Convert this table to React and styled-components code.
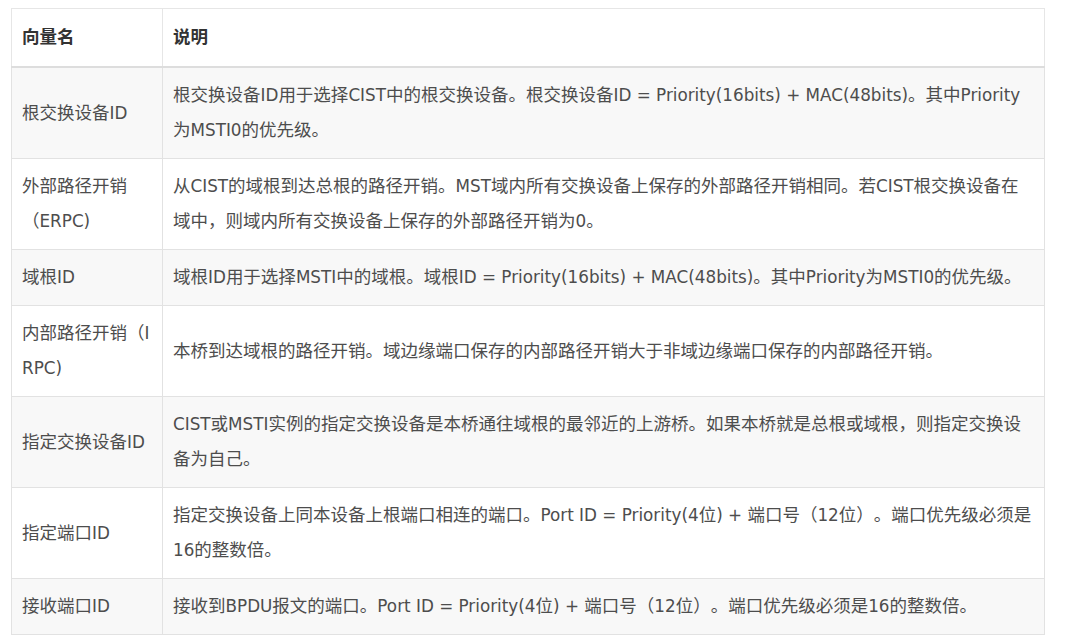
import React from 'react';
import styled, { createGlobalStyle } from 'styled-components';

const GlobalStyle = createGlobalStyle`
  body {
    margin: 0;
    background: #ffffff;
    font-family: "DejaVu Sans", "Noto Sans CJK SC", sans-serif;
  }
`;

const Page = styled.div`
  padding: 8px 0 0 11px;
`;

const Table = styled.table`
  width: 1034px;
  border-collapse: collapse;
  border: 1px solid #e2e2e2;
  font-size: 17.5px;
  line-height: 35px;
  color: #4d4d4d;
  text-spacing-trim: space-all;
`;

const HeadCell = styled.th`
  text-align: left;
  font-weight: bold;
  color: #333333;
  padding: 11px 10px;
  border: 1px solid #e6e6e6;
  border-bottom: 2px solid #dddddd;
  background: #ffffff;
  width: ${({ $w }) => $w || 'auto'};
`;

const Row = styled.tr`
  background: ${({ $striped }) => ($striped ? '#f8f8f8' : '#ffffff')};
`;

const Cell = styled.td`
  padding: 10px;
  border: 1px solid #e2e2e2;
  vertical-align: middle;
`;

const DescCell = styled(Cell)`
  padding-right: 12px;
`;

// latin runs get their own size so the mixed lines keep the reference widths
const Latin = styled.span`
  font-size: 16.8px;
`;

const rows = [
  ['根交换设备ID', '根交换设备ID用于选择CIST中的根交换设备。根交换设备ID = Priority(16bits) + MAC(48bits)。其中Priority为MSTI0的优先级。'],
  ['外部路径开销（ERPC)', '从CIST的域根到达总根的路径开销。MST域内所有交换设备上保存的外部路径开销相同。若CIST根交换设备在域中，则域内所有交换设备上保存的外部路径开销为0。'],
  ['域根ID', '域根ID用于选择MSTI中的域根。域根ID = Priority(16bits) + MAC(48bits)。其中Priority为MSTI0的优先级。'],
  ['内部路径开销（I RPC)', '本桥到达域根的路径开销。域边缘端口保存的内部路径开销大于非域边缘端口保存的内部路径开销。'],
  ['指定交换设备ID', 'CIST或MSTI实例的指定交换设备是本桥通往域根的最邻近的上游桥。如果本桥就是总根或域根，则指定交换设备为自己。'],
  ['指定端口ID', '指定交换设备上同本设备上根端口相连的端口。Port ID = Priority(4位) + 端口号（12位）。端口优先级必须是16的整数倍。'],
  ['接收端口ID', '接收到BPDU报文的端口。Port ID = Priority(4位) + 端口号（12位）。端口优先级必须是16的整数倍。'],
];

const Mixed = ({ text }) =>
  text.split(/([\x20-\x7e]+)/).map((part, i) =>
    i % 2 ? <Latin key={i}>{part}</Latin> : part
  );

export default function App() {
  return (
    <>
      <GlobalStyle />
      <Page>
        <Table>
          <thead>
            <tr>
              <HeadCell $w="130px">向量名</HeadCell>
              <HeadCell>说明</HeadCell>
            </tr>
          </thead>
          <tbody>
            {rows.map(([name, desc], i) => (
              <Row key={name} $striped={i % 2 === 0}>
                <Cell><Mixed text={name} /></Cell>
                <DescCell><Mixed text={desc} /></DescCell>
              </Row>
            ))}
          </tbody>
        </Table>
      </Page>
    </>
  );
}
